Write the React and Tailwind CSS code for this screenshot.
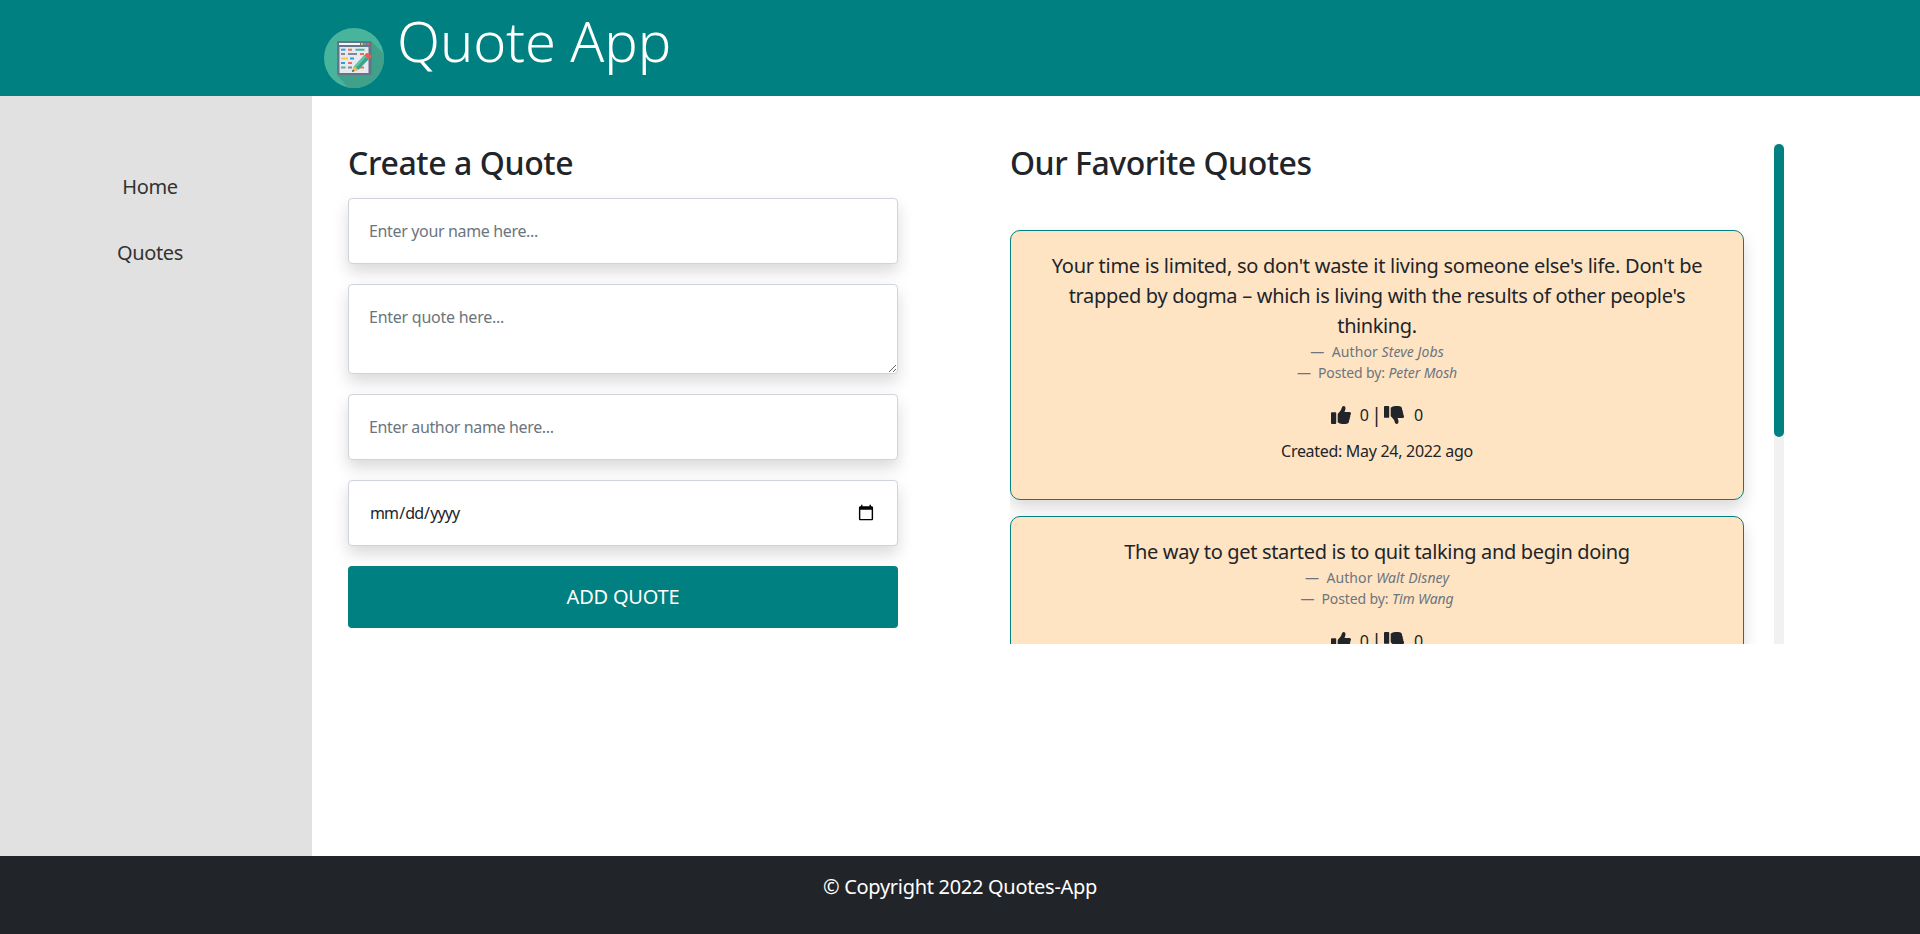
const quotes = [
  {
    lines: [
      { text: "Your time is limited, so don't waste it living someone else's life. Don't be", track: "tracking-[-0.28px]" },
      { text: "trapped by dogma – which is living with the results of other people's", track: "tracking-[-0.31px]" },
      { text: "thinking.", track: "tracking-[-0.4px]" },
    ],
    author: "Steve Jobs",
    poster: "Peter Mosh",
  },
  {
    lines: [{ text: "The way to get started is to quit talking and begin doing", track: "tracking-[-0.34px]" }],
    author: "Walt Disney",
    poster: "Tim Wang",
  },
];

const field =
  "block w-full rounded border border-[#ced4da] bg-white p-5 text-base leading-6 text-[#212529] placeholder-[#6c757d] shadow-[0_8px_16px_rgba(0,0,0,0.15)]";

function Logo() {
  return (
    <svg viewBox="0 0 60 60" className="size-[60px]">
      <circle cx="30" cy="30" r="30" fill="#48b49b" />
      <path d="M47 13 L60 26 V30 A30 30 0 0 1 24 59.4 L13 47 Z" fill="#40a08a" />
      <rect x="13" y="13" width="34.5" height="34" rx="1.5" fill="#64748b" />
      <rect x="15" y="15" width="21" height="2" fill="#f4f6f8" />
      <rect x="37" y="15" width="2" height="2" fill="#f0c04a" />
      <rect x="40" y="15" width="2" height="2" fill="#48b49b" />
      <rect x="43" y="15" width="2" height="2" fill="#e8604c" />
      <rect x="15.5" y="19" width="29" height="26" fill="#e6eaee" />
      <g strokeWidth="2">
        <path d="M17 21.7h4.5" stroke="#3a9bdc" />
        <path d="M24 21.7h4M36 26h4M24 35h4M34 39.5h6" stroke="#e8705c" />
        <path d="M31.5 21.7h9M17 39.5h4.5" stroke="#48b49b" />
        <path d="M17 26h4M24 26h9M24 39.5h4" stroke="#7c8a9c" />
        <path d="M17 30.5h7" stroke="#f8c840" />
        <path d="M26 30.5h4M17 35h4" stroke="#2f9ae0" />
      </g>
      <path d="M28 44 L30 38.5 L40 27.5 L45 31 L34.5 41.8 Z" fill="#3ba58c" />
      <path d="M30 38.5 L40 27.5 L42 29 L31.8 40.3 Z" fill="#5cc4a8" />
      <path d="M28 44 L30 38.5 L34.5 41.8 Z" fill="#f4c04c" />
      <path d="M28 44 L28.8 41.6 L30.5 43 Z" fill="#4a5568" />
      <path d="M40 27.5 L42.5 25 Q43.5 24.6 45 25.8 L47 27.7 Q47.6 28.6 47 29.3 L45 31.3 Z" fill="#e8604c" />
    </svg>
  );
}

function Thumb({ className = "" }) {
  return (
    <svg viewBox="0 0 20 18" className={`h-[18px] w-5 shrink-0 ${className}`} fill="currentColor">
      <rect x="0" y="6.2" width="5.2" height="11.8" rx="0.9" />
      <path d="M6.7 8.6 Q6.9 7.2 8.2 6.2 Q10.3 4.4 10.8 1.7 Q11.2 0 12.6 0 Q14.6 0.2 14.5 2.3 Q14.4 4 13.5 5.9 H18.6 Q20.2 6.2 20 7.6 Q19.9 8.8 19.2 9.4 Q19.5 10.7 18.7 11.9 Q19 13.1 18.1 14.2 Q18.3 16.3 17 17.3 Q16 18 14.4 18 H11 Q8.6 18 6.7 16.3 Z" />
    </svg>
  );
}

function QuoteCard({ quote }) {
  return (
    <article className="w-[734px] shrink-0 rounded-[10px] border border-[teal] bg-[#ffe4c4] p-5 text-center text-[#212529] shadow-[0_8px_16px_rgba(0,0,0,0.15)]">
      <blockquote className="mb-4">
        {quote.lines.map((line) => (
          <p key={line.text} className={`whitespace-nowrap text-xl leading-[30px] ${line.track}`}>{line.text}</p>
        ))}
        <footer className="text-sm leading-[21px] text-[#6c757d]">
          <p className="tracking-[0.08px]">—&nbsp; Author <cite>{quote.author}</cite></p>
          <p className="tracking-[-0.1px]">—&nbsp; Posted by: <cite>{quote.poster}</cite></p>
        </footer>
      </blockquote>
      <div className="mb-2 flex h-8 items-center justify-center">
        <Thumb />
        <span className="ml-[9px]">0</span>
        <span className="mx-0.5 text-xl">|</span>
        <Thumb className="-scale-y-100" />
        <span className="ml-[10px]">0</span>
      </div>
      <p className="mb-4 text-base leading-6 tracking-[-0.3px]">Created: May 24, 2022 ago</p>
    </article>
  );
}

export default function App() {
  return (
    <div className="flex h-[934px] w-full flex-col bg-white font-['Noto_Sans',sans-serif] text-[#212529]">
      <header className="flex h-24 shrink-0 items-start gap-[13px] bg-[teal] pl-[324px]">
        <div className="pt-7"><Logo /></div>
        <h1 className="pt-[7px] text-[56px] leading-[67px] font-light tracking-[-0.1px] text-white">Quote App</h1>
      </header>
      <div className="flex min-h-0 flex-1">
        <nav className="flex w-[312px] shrink-0 flex-col items-center gap-9 bg-[#e1e1e1] pt-[76px] pr-3 text-xl leading-[30px] tracking-[-0.35px] text-[#333]">
          <a>Home</a>
          <a>Quotes</a>
        </nav>
        <main className="flex flex-1 items-start pt-12 pl-9">
          <form className="flex w-[550px] flex-col gap-5">
            <h2 className="-mb-1 text-[32px] leading-[38px] font-medium tracking-[-0.4px]">Create a Quote</h2>
            <input className={`${field} tracking-[-0.35px]`} placeholder="Enter your name here..." />
            <textarea className={`${field} tracking-[-0.25px]`} rows={2} placeholder="Enter quote here..." />
            <input className={`${field} tracking-[-0.35px]`} placeholder="Enter author name here..." />
            <input
              type="date"
              className={`${field} h-[66px] tracking-[-0.9px] [&::-webkit-calendar-picker-indicator]:mr-[2px] [&::-webkit-calendar-picker-indicator]:size-[18px] [&::-webkit-calendar-picker-indicator]:p-0`}
            />
            <button type="button" className="h-[62px] rounded bg-[teal] text-xl tracking-[-0.2px] text-white">ADD QUOTE</button>
          </form>
          <section className="ml-28 flex h-[500px] w-[774px] justify-between overflow-hidden">
            <div className="flex flex-col gap-4">
              <h2 className="mb-8 text-[32px] leading-[38px] font-medium tracking-[-0.48px]">Our Favorite Quotes</h2>
              {quotes.map((quote) => <QuoteCard key={quote.author} quote={quote} />)}
            </div>
            <div className="w-[10px] shrink-0 bg-[#f1f1f1]">
              <div className="h-[293px] rounded-[10px] bg-[teal]" />
            </div>
          </section>
        </main>
      </div>
      <footer className="h-[78px] shrink-0 bg-[#212529] pt-4 text-center text-xl leading-[30px] tracking-[-0.3px] text-white">
        © Copyright 2022 Quotes-App
      </footer>
    </div>
  );
}
